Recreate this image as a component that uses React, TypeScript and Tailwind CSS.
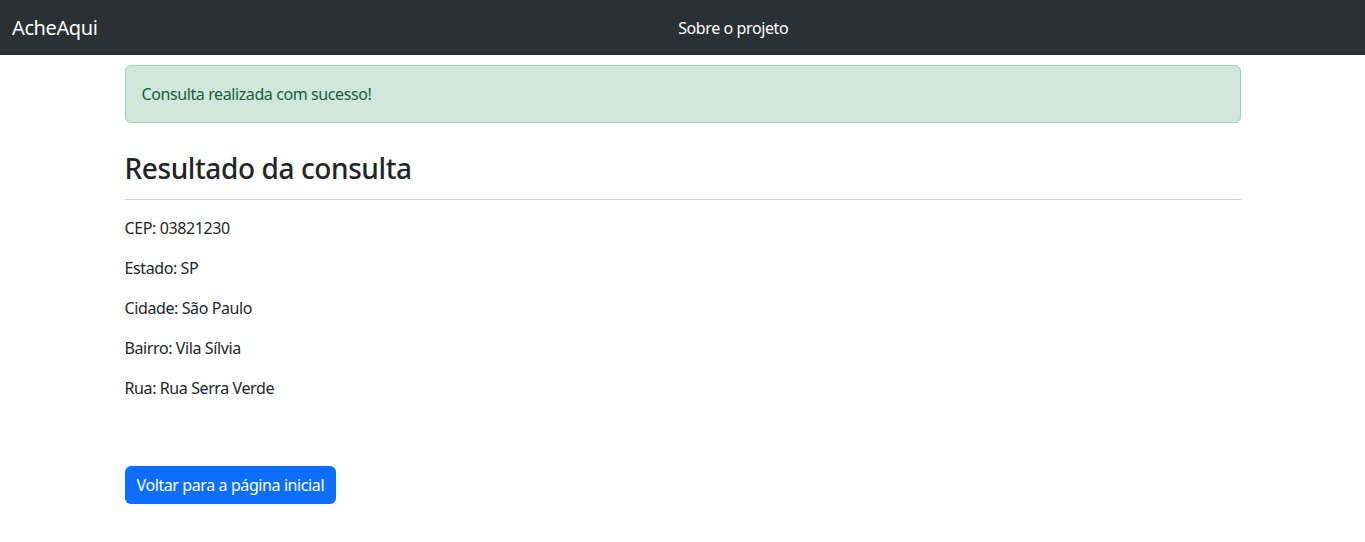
export default function App() {
  const rows = [
    ["CEP", "03821230"],
    ["Estado", "SP"],
    ["Cidade", "São Paulo"],
    ["Bairro", "Vila Sílvia"],
    ["Rua", "Rua Serra Verde"],
  ];

  return (
    <div className="min-h-screen bg-white font-['Noto_Sans',sans-serif] tracking-[-0.025em] text-[#212529]">
      <nav className="flex h-[55px] items-center bg-[#2b3035] px-3">
        <span className="mr-4 text-[20px] text-white">AcheAqui</span>
        <div className="flex flex-1 justify-center">
          <a className="text-[16px] text-white">Sobre o projeto</a>
        </div>
      </nav>

      <main className="mx-auto w-[1140px] px-3">
        <div className="mt-[10px] rounded-md border border-[#a3cfbb] bg-[#d1e7dd] px-4 py-4 text-[16px] leading-6 text-[#13613f]">
          Consulta realizada com sucesso!
        </div>

        <h3 className="mt-7 text-[28px] leading-[34px] font-medium">Resultado da consulta</h3>
        <hr className="mt-[14px] mb-4 border-t border-[#c9d9d2]" />

        <div className="flex flex-col gap-4 text-[16px] leading-6">
          {rows.map(([label, value]) => (
            <p key={label}>
              {label}: {value}
            </p>
          ))}
        </div>

        <button className="mt-[66px] rounded-md bg-[#0d6efd] px-3 py-[7px] text-[16px] leading-6 text-white">
          Voltar para a página inicial
        </button>
      </main>
    </div>
  );
}
